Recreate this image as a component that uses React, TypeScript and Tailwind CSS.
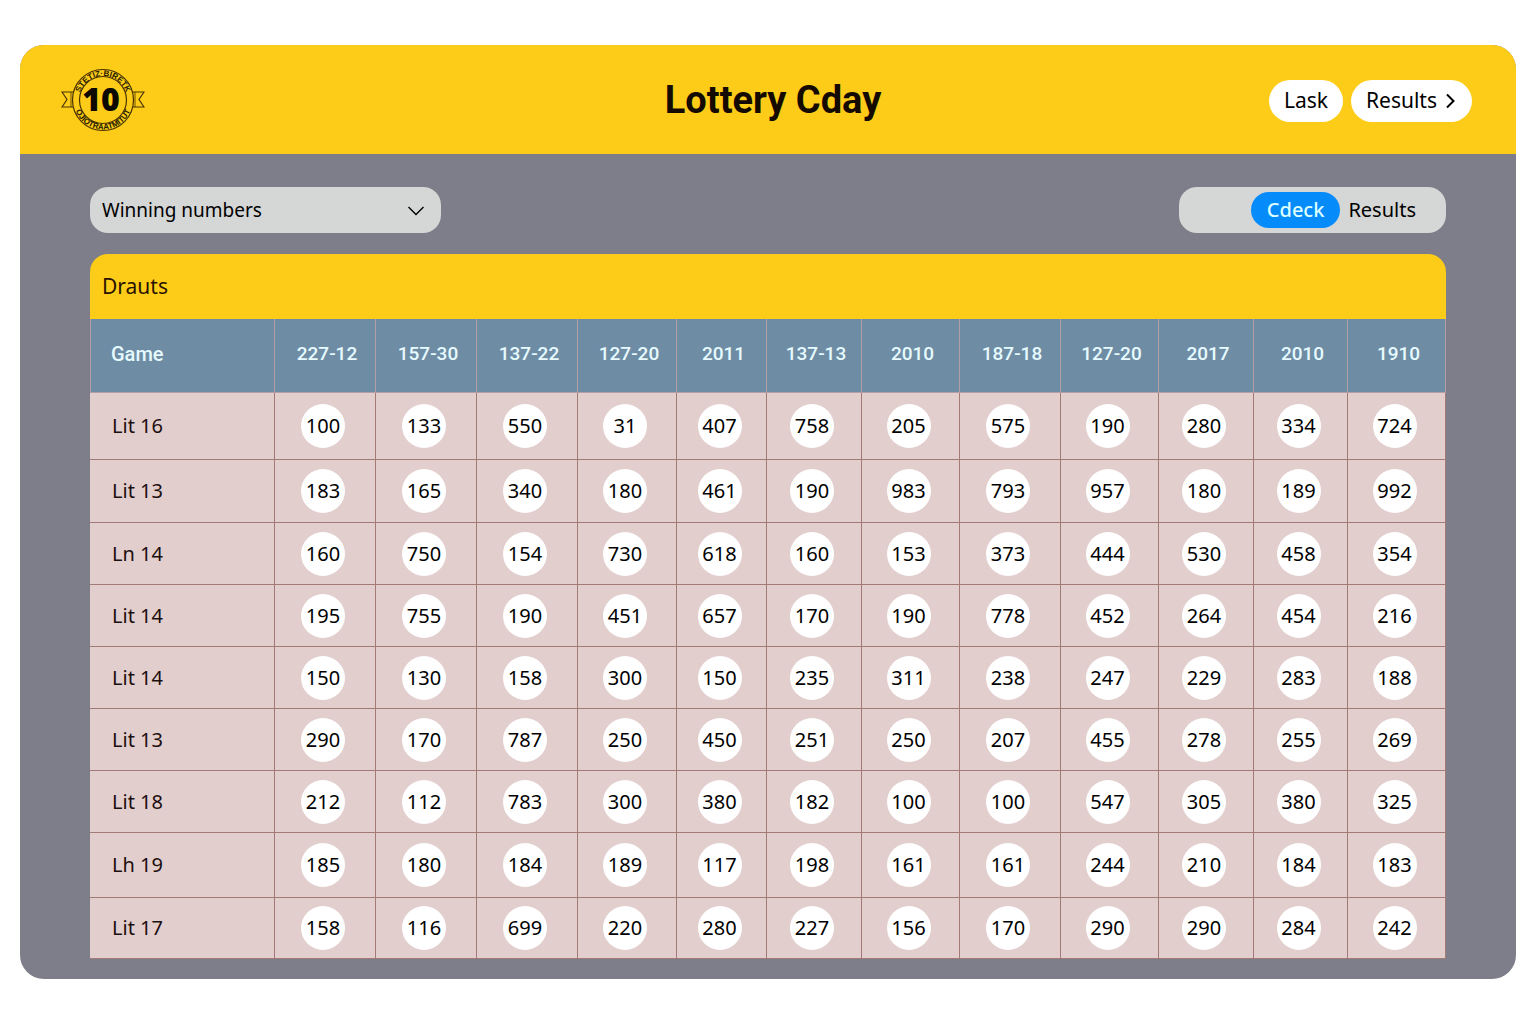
import React, { useState } from 'react';

const columns = ['227-12', '157-30', '137-22', '127-20', '2011', '137-13', '2010', '187-18', '127-20', '2017', '2010', '1910'];

const draws = [
  { game: 'Lit 16', numbers: [100, 133, 550, 31, 407, 758, 205, 575, 190, 280, 334, 724] },
  { game: 'Lit 13', numbers: [183, 165, 340, 180, 461, 190, 983, 793, 957, 180, 189, 992] },
  { game: 'Ln 14', numbers: [160, 750, 154, 730, 618, 160, 153, 373, 444, 530, 458, 354] },
  { game: 'Lit 14', numbers: [195, 755, 190, 451, 657, 170, 190, 778, 452, 264, 454, 216] },
  { game: 'Lit 14', numbers: [150, 130, 158, 300, 150, 235, 311, 238, 247, 229, 283, 188] },
  { game: 'Lit 13', numbers: [290, 170, 787, 250, 450, 251, 250, 207, 455, 278, 255, 269] },
  { game: 'Lit 18', numbers: [212, 112, 783, 300, 380, 182, 100, 100, 547, 305, 380, 325] },
  { game: 'Lh 19', numbers: [185, 180, 184, 189, 117, 198, 161, 161, 244, 210, 184, 183] },
  { game: 'Lit 17', numbers: [158, 116, 699, 220, 280, 227, 156, 170, 290, 290, 284, 242] },
];

const Logo: React.FC = () => (
  <svg width="84" height="64" viewBox="0 0 84 64" fill="none" stroke="#4a3300" role="img" aria-label="10">
    {/* Ribbon tails */}
    <path d="M13 24H1l5 7.500-5 7.500h13M71 24h12l-5 7.500 5 7.500H70" strokeWidth="1.200" />
    <path d="M10 24v15M74 24v15" strokeWidth="0.800" />
    {/* Seal */}
    <circle cx="42" cy="32" r="30.500" fill="#fdcc18" strokeWidth="1.200" />
    <circle cx="42" cy="32" r="23.500" strokeWidth="1.200" />
    <path id="seal-top" d="M18 32a24 24 0 0 1 48 0" stroke="none" />
    <path id="seal-bottom" d="M12.500 32a29.500 29.500 0 0 0 59 0" stroke="none" />
    <g fill="#241800" stroke="none" fontFamily="'Liberation Sans', sans-serif" fontWeight="700" textAnchor="middle">
      <text fontSize="8">
        <textPath href="#seal-top" startOffset="50%">STETIZ·BIRETK</textPath>
      </text>
      <text fontSize="8">
        <textPath href="#seal-bottom" startOffset="50%">OJIOTRAATMITUT</textPath>
      </text>
      <text x="40" y="43" fontSize="32" fontFamily="'Noto Sans', sans-serif" fontWeight="900" fill="#0d0800">10</text>
    </g>
  </svg>
);

export default function App() {
  const [tab, setTab] = useState('Cdeck');

  return (
    <div className="min-h-screen bg-white px-5 py-[45px] font-['Noto_Sans',sans-serif] text-black">
      <main className="rounded-3xl overflow-hidden bg-[#7e7e8a]">
        {/* Header */}
        <header className="grid grid-cols-[46fr_auto_45fr] items-center bg-[#fdcc18] h-[109px] pl-[41px] pr-11">
          <Logo />
          <h1 className="font-['Roboto',sans-serif] font-bold text-[38px] leading-none text-[#140a00]">Lottery Cday</h1>
          <div className="flex justify-end gap-2 pt-[3px]">
            <button className="h-[42px] px-[15px] rounded-full bg-white text-[21px]">Lask</button>
            <button className="h-[42px] px-[15px] rounded-full bg-white text-[21px] flex items-center gap-2">
              Results
              <svg width="12" height="18" viewBox="0 0 12 18" fill="none" stroke="currentColor" strokeWidth="2">
                <path d="M2 2.500 8.500 9 2 15.500" />
              </svg>
            </button>
          </div>
        </header>

        <div className="px-[70px] pt-[33px] pb-5">
          {/* Filters */}
          <div className="flex items-center justify-between mb-[21px]">
            <div className="relative w-[351px]">
              <select
                aria-label="Winning numbers"
                className="appearance-none w-full h-[46px] rounded-[18px] bg-[#d5d6d6] pl-3 pr-10 text-[19px]"
              >
                <option>Winning numbers</option>
              </select>
              <svg
                className="absolute right-4 top-[18px] pointer-events-none"
                width="18"
                height="12"
                viewBox="0 0 18 12"
                fill="none"
                stroke="currentColor"
                strokeWidth="1.400"
              >
                <path d="M1.500 2 9 9.500 16.500 2" />
              </svg>
            </div>

            <div className="flex items-center justify-end w-[267px] h-[46px] rounded-[18px] bg-[#d5d6d6] pr-[22px] text-[20px]">
              {['Cdeck', 'Results'].map((name) => (
                <button
                  key={name}
                  onClick={() => setTab(name)}
                  aria-pressed={tab === name}
                  className={
                    tab === name
                      ? 'h-9 px-4 rounded-full bg-[#068bfb] text-[#dcffff] font-medium'
                      : 'h-9 px-2 rounded-full'
                  }
                >
                  {name}
                </button>
              ))}
            </div>
          </div>

          {/* Draws */}
          <section>
            <h2 className="h-[65px] flex items-center rounded-t-[18px] bg-[#fdcc18] px-3 text-[21px] text-[#2a1200]">Drauts</h2>
            <table className="w-full table-fixed border-separate border-spacing-0 text-[20px] leading-none">
              <colgroup>
                <col className="w-[185px]" />
                <col className="w-[101px]" />
                <col className="w-[101px]" />
                <col className="w-[101px]" />
                <col className="w-[99px]" />
                <col className="w-[90px]" />
                <col className="w-[95px]" />
                <col className="w-[98px]" />
                <col className="w-[101px]" />
                <col className="w-[98px]" />
                <col className="w-[95px]" />
                <col className="w-[94px]" />
                <col className="w-[98px]" />
              </colgroup>
              <thead>
                <tr className="h-[74px] bg-[#6e8da4] font-['Roboto',sans-serif] text-[#e6faff]">
                  <th className="border-x border-b border-[#b39fa6] pl-5 pb-1 text-left font-medium">Game</th>
                  {columns.map((label, i) => (
                    <th key={i} className="border-r border-b border-[#b39fa6] pl-1 pb-1 text-[19px] font-medium">{label}</th>
                  ))}
                </tr>
              </thead>
              <tbody>
                {draws.map((draw, i) => (
                  <tr key={i} className="h-[62px] first:h-[67px] nth-2:h-[63px] nth-last-2:h-[65px] last:h-[61px] bg-[#e2cecd]">
                    <td className="border-r border-b border-[#a37a76] pl-[22px] text-[#1c0f10]">{draw.game}</td>
                    {draw.numbers.map((n, j) => (
                      <td key={j} className="border-r border-b border-[#a37a76] pr-1">
                        <span className="mx-auto flex size-11 items-center justify-center rounded-full bg-white">{n}</span>
                      </td>
                    ))}
                  </tr>
                ))}
              </tbody>
            </table>
          </section>
        </div>
      </main>
    </div>
  );
}
